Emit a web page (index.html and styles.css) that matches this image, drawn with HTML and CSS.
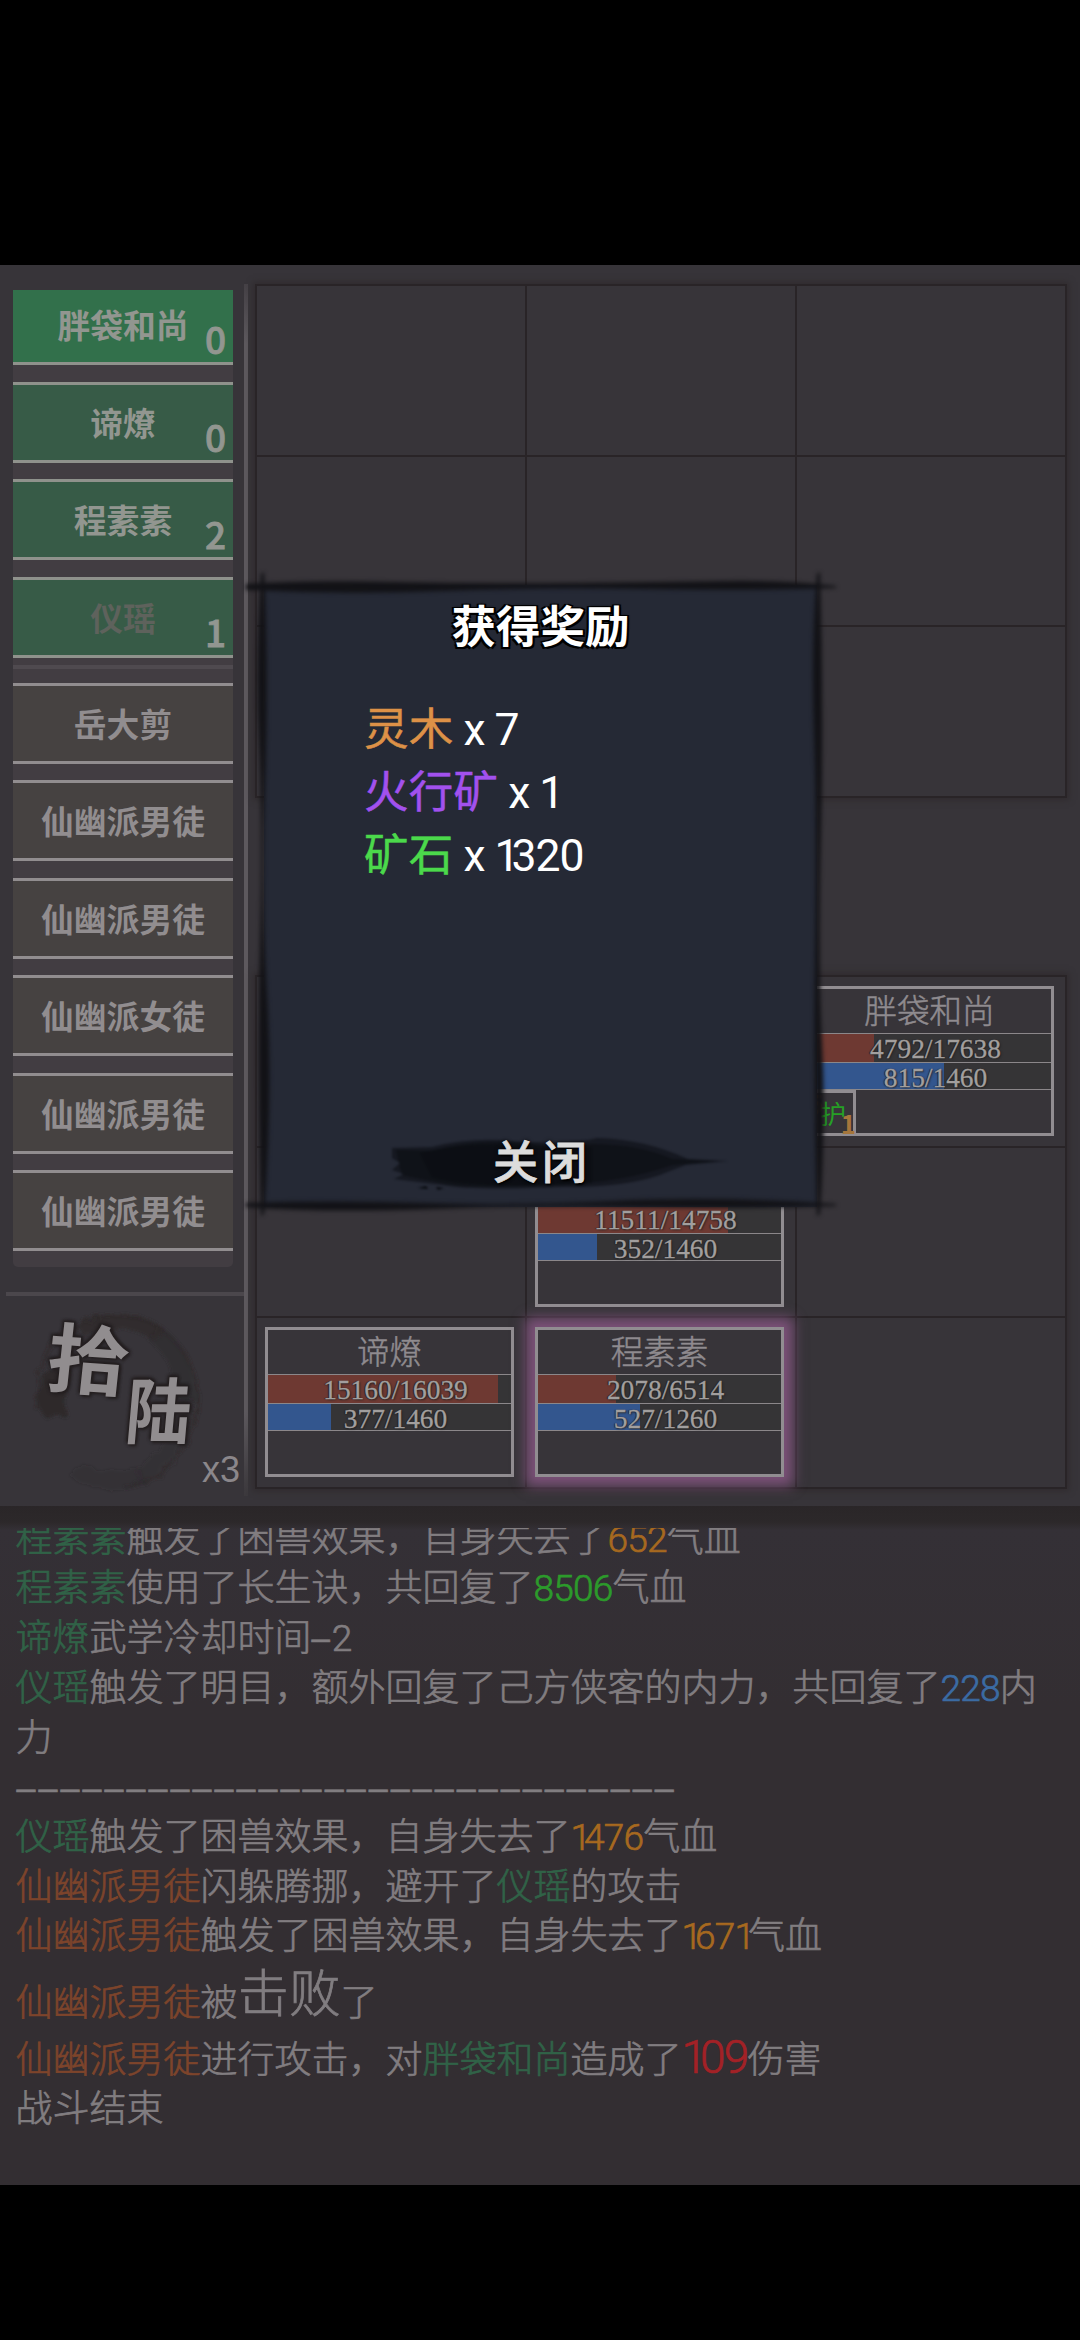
FILE: index.html
```html
<!DOCTYPE html>
<html lang="zh-CN">
<head>
<meta charset="UTF-8">
<meta name="viewport" content="width=device-width, initial-scale=1.0">
<title>战斗</title>
<link rel="stylesheet" href="styles.css">
</head>
<body>

<div class="game">

    <!-- Battle -->
    <div class="battle">
        <div class="side">
            <div class="turn-list">
                <div class="turn ally active">胖袋和尚<b>0</b></div>
                <div class="turn ally">谛燎<b>0</b></div>
                <div class="turn ally">程素素<b>2</b></div>
                <div class="turn ally done"><span>仪瑶</span><b>1</b></div>
                <div class="split"></div>
                <div class="turn">岳大剪</div>
                <div class="turn">仙幽派男徒</div>
                <div class="turn">仙幽派男徒</div>
                <div class="turn">仙幽派女徒</div>
                <div class="turn">仙幽派男徒</div>
                <div class="turn">仙幽派男徒</div>
            </div>
            <div class="round">
                <svg class="ink-ring" width="190" height="190" viewBox="0 0 190 190">
                    <defs>
                        <filter id="rough" x="-10%" y="-10%" width="120%" height="120%"><feTurbulence type="fractalNoise" baseFrequency="0.08" numOctaves="3"/><feDisplacementMap in="SourceGraphic" scale="9"/><feGaussianBlur stdDeviation="1.6"/></filter>
                    </defs>
                    <g filter="url(#rough)" fill="none" stroke="#2d282a">
                        <path d="M18 104C8 50 46 10 96 10C146 10 180 52 177 96C175 140 144 176 104 182" stroke-width="3" opacity=".6"/>
                        <path d="M60 24C84 10 116 12 138 28" stroke-width="16" opacity=".7"/>
                        <path d="M134 26C156 44 166 68 166 96" stroke-width="19" opacity=".5"/>
                        <path d="M166 92C166 124 148 154 118 170" stroke-width="15" opacity=".32"/>
                        <path d="M122 168C96 178 76 176 56 164" stroke-width="18" opacity=".2"/>
                        <path d="M18 78C14 92 20 106 26 112L46 108L44 76L36 56Z" fill="#2b2626" stroke="none" opacity=".8"/>
                    </g>
                </svg>
                <span class="brush shi">拾</span>
                <span class="brush liu">陆</span>
                <span class="times">x3</span>
            </div>
        </div>

        <div class="field">
            <div class="board">
                <div class="cell"></div><div class="cell"></div><div class="cell"></div>
                <div class="cell"></div><div class="cell"></div><div class="cell"></div>
                <div class="cell"></div><div class="cell"></div><div class="cell"></div>
            </div>
            <div class="board">
                <div class="cell"></div>
                <div class="cell"></div>
                <div class="cell">
                    <div class="unit">
                        <div class="unit-name">胖袋和尚</div>
                        <div class="bar hp"><i style="width:27.2%"></i><span>4792/17638</span></div>
                        <div class="bar mp"><i style="width:55.8%"></i><span>815/1460</span></div>
                        <div class="buff"><em>5</em>护<b>1</b></div>
                    </div>
                </div>
                <div class="cell"></div>
                <div class="cell">
                    <div class="unit">
                        <div class="unit-name">仪瑶</div>
                        <div class="bar hp"><i style="width:78%"></i><span>11511/14758</span></div>
                        <div class="bar mp"><i style="width:24.1%"></i><span>352/1460</span></div>
                    </div>
                </div>
                <div class="cell"></div>
                <div class="cell">
                    <div class="unit">
                        <div class="unit-name">谛燎</div>
                        <div class="bar hp"><i style="width:94.5%"></i><span>15160/16039</span></div>
                        <div class="bar mp"><i style="width:25.8%"></i><span>377/1460</span></div>
                    </div>
                </div>
                <div class="cell">
                    <div class="unit current">
                        <div class="unit-name">程素素</div>
                        <div class="bar hp"><i style="width:31.9%"></i><span>2078/6514</span></div>
                        <div class="bar mp"><i style="width:41.8%"></i><span>527/1260</span></div>
                    </div>
                </div>
                <div class="cell"></div>
            </div>
        </div>
    </div>

    <!-- Battle log -->
    <div class="log">
        <div class="log-body">
            <p><span class="us">程素素</span>触发了困兽效果，自身失去了<span class="num lost">652</span>气血</p>
            <p><span class="us">程素素</span>使用了长生诀，共回复了<span class="num heal">8506</span>气血</p>
            <p><span class="us">谛燎</span>武学冷却时间<span class="minus">–</span><span class="num">2</span></p>
            <p><span class="us">仪瑶</span>触发了明目，额外回复了己方侠客的内力，共回复了<span class="num mana">228</span>内力</p>
            <p class="dashes">––––––––––––––––––––––––––––––</p>
            <p><span class="us">仪瑶</span>触发了困兽效果，自身失去了<span class="num lost"><u>1</u>476</span>气血</p>
            <p><span class="foe">仙幽派男徒</span>闪躲腾挪，避开了<span class="us">仪瑶</span>的攻击</p>
            <p><span class="foe">仙幽派男徒</span>触发了困兽效果，自身失去了<span class="num lost"><u>1</u>67<u>1</u></span>气血</p>
            <p><span class="foe">仙幽派男徒</span>被<span class="big">击败</span>了</p>
            <p><span class="foe">仙幽派男徒</span>进行攻击，对<span class="us">胖袋和尚</span>造成了<span class="num hit"><u>1</u>09</span>伤害</p>
            <p>战斗结束</p>
        </div>
    </div>

    <!-- Reward popup -->
    <div class="popup">
        <svg class="popup-frame" width="594" height="660" viewBox="0 0 594 660">
            <g fill="#121216">
                <path d="M2 20Q60 16 150 18T330 19T480 17T592 22V24Q500 27 400 25T200 27T2 26Z"/>
                <path d="M2 639Q90 636 180 639T370 637T592 640V642Q500 645 400 643T190 645T2 643Z"/>
                <path d="M17 10L20 8Q25 110 21 220T23 430T20 650L17 652Q13 500 16 380T15 180T17 10Z"/>
                <path d="M573 10L576 8Q580 140 577 270T578 480T576 650L573 652Q569 520 571 390T570 170T573 10Z"/>
            </g>
        </svg>
        <h2>获得奖励</h2>
        <ul class="rewards">
            <li><span class="c-orange">灵木</span> x 7</li>
            <li><span class="c-purple">火行矿</span> x <u>1</u></li>
            <li><span class="c-green">矿石</span> x <u>1</u>320</li>
        </ul>
        <div class="close">
            <svg width="350" height="60" viewBox="0 0 350 60">
                <g fill="#090b10">
                    <path d="M10 15L50 14Q90 4 130 8Q190 12 215 5Q262 6 306 26L346 28L304 32Q285 39 278 42Q240 55 180 54Q90 58 60 52L12 46L22 41L10 37L18 30L10 25Z" opacity=".55"/>
                    <path d="M14 17L50 18Q90 6 140 10Q170 14 190 12Q250 8 290 26L335 28L290 32Q240 50 170 52Q90 56 60 50L20 42Z" opacity=".5"/>
                    <path d="M38 20Q90 8 150 14H210V50Q90 56 50 44Z" opacity=".5"/>
                    <path d="M36 55l8-2 2 3zM54 54l8 1-6 2z"/>
                </g>
            </svg>
            <span>关闭</span>
        </div>
    </div>
</div>

</body>
</html>
```
FILE: styles.css
```css
* {
    box-sizing: border-box;
    margin: 0;
    padding: 0;
}

body {
    width: 1080px;
    height: 2340px;
    background-color: #000;
    font-family: Roboto, "Noto Sans CJK SC", sans-serif;
    overflow: hidden;
}

u, i, em {
    text-decoration: none;
    font-style: normal;
}

.game {
    position: relative;
    padding-top: 265px;
}

.battle {
    display: flex;
    height: 1241px;
    background-color: #373439;
}

/* left column */
.side {
    width: 248px;
    margin-top: 19px;
    height: 1212px;
    padding-top: 6px;
    border-right: 4px solid;
    border-image: linear-gradient(#454146, #5d595e 5%, #5d595e 93%, #3b383c) 1;
}

.turn-list {
    display: flex;
    flex-direction: column;
    justify-content: flex-end;
    gap: 16.5px;
    width: 220px;
    height: 977px;
    margin-left: 13px;
    padding-bottom: 16px;
    background-color: #423d42;
    border-radius: 0 0 5px 5px;
    overflow: hidden;
}

.turn {
    position: relative;
    flex: none;
    height: 81px;
    line-height: 73px;
    border-top: 3px solid #918d8f;
    border-bottom: 3px solid #918d8f;
    background-color: #464241;
    color: #918d8f;
    font-family: "Noto Sans CJK SC", sans-serif;
    font-size: 32.8px;
    font-weight: 700;
    text-align: center;
}

.ally {
    background-color: #375b47;
    border-color: #8f928c;
    color: #929690;
}

.active {
    background-color: #32704b;
}

.done span {
    color: #5e625c;
}

.turn b {
    position: absolute;
    right: 7px;
    bottom: -2px;
    font-size: 37px;
    line-height: 52px;
    font-weight: 500;
    -webkit-text-stroke: 0.8px;
}

.split {
    flex: none;
    height: 4px;
    margin: -9px 0 -3px;
    background-color: #4f4a4f;
}

.round {
    position: relative;
    height: 206px;
    margin: 25px 0 0 6px;
    border-top: 4px solid #4b474c;
}

.ink-ring {
    position: absolute;
    left: 14px;
    top: 10px;
}

.brush {
    position: absolute;
    color: #918d8f;
    font-family: "Noto Sans CJK SC", sans-serif;
    font-weight: 700;
    line-height: 1;
    text-shadow: 0 0 4px #241f20, 2px 2px 3px #241f20, -2px -2px 3px #241f20, 2px -2px 3px #241f20;
}

.shi {
    left: 42px;
    top: 19px;
    font-size: 82px;
    transform: skew(-6deg, 4deg) scaleY(0.92);
}

.liu {
    left: 117px;
    top: 75px;
    font-size: 72px;
    transform: skewX(-5deg) scaleX(0.9);
}

.times {
    position: absolute;
    right: 4px;
    bottom: 10px;
    color: #8b878b;
    font-family: "Liberation Sans", sans-serif;
    font-size: 36px;
    line-height: 36px;
}

/* boards */
.field {
    padding: 19px 0 0 7px;
}

.board {
    display: grid;
    grid-template-columns: repeat(3, 270px);
    grid-auto-rows: 170.6px;
    width: 812px;
    height: 514px;
    margin-bottom: 177px;
    border: 2px solid #292427;
    border-width: 2px 0 0 2px;
    box-shadow: 0 0 6px 2px #302b2e;
}

.cell {
    padding: 9px 0 0 8px;
    border: 2px solid #292427;
    border-width: 0 2px 2px 0;
    background-color: #373439;
}

.unit {
    position: relative;
    width: 249px;
    height: 150px;
    border: 3px solid #918d91;
    background-color: #373439;
}

.current {
    box-shadow: 0 0 12px 9px #7c5179;
}

.unit-name {
    height: 44px;
    line-height: 40px;
    color: #8f8b8f;
    font-family: "Noto Sans CJK SC", sans-serif;
    font-size: 32.6px;
    font-weight: 300;
    text-align: center;
    -webkit-text-stroke: 0.5px;
}

.bar {
    position: relative;
    height: 28px;
    border-top: 1px solid #8b878a;
    background-color: #353436;
}

.bar i {
    display: block;
    height: 100%;
}

.hp {
    height: 29px;
}

.hp i {
    background-color: #6e3932;
}

.mp i {
    background-color: #33568e;
}

.mp {
    border-bottom: 1px solid #8b878a;
}

.bar span {
    position: absolute;
    inset: 0 0 0 12px;
    color: #a29f9e;
    font-family: "Liberation Serif", serif;
    font-size: 27.4px;
    line-height: 31px;
    text-align: center;
    text-shadow: 1px 1px 2px #222, -1px 0 1px #222;
    -webkit-text-stroke: 0.3px;
}

.mp span {
    line-height: 31px;
}

.buff {
    position: absolute;
    left: 0;
    bottom: -3px;
    width: 48px;
    height: 46px;
    border: 3px solid #918d91;
    color: #26a025;
    font-family: "Noto Sans CJK SC", sans-serif;
    font-size: 26px;
    line-height: 40px;
    text-align: center;
    padding-left: 2px;
}

.buff b, .buff em {
    position: absolute;
    color: #a5763c;
    font-size: 26px;
    line-height: 26px;
    font-weight: 700;
}

.buff b {
    right: -3px;
    bottom: -3px;
}

.buff em {
    left: -3px;
    top: -3px;
    color: #6a4a2c;
}

/* log */
.log {
    height: 679px;
    padding-top: 22px;
    background: linear-gradient(#2a2628, #2c282a 16px, #343036 24px, #332e32 200px, #332e32);
}

.log-body {
    height: 640px;
    padding: 0 30px 0 15.5px;
    color: #817d80;
    font-size: 37px;
    font-weight: 300;
    line-height: 49.6px;
    overflow: hidden;
    -webkit-text-stroke: 0.7px;
}

.log-body p:first-child {
    margin-top: -13.5px;
}

.log-body .num {
    letter-spacing: -0.8px;
}

.log-body .num u {
    letter-spacing: -7px;
}

.us {
    color: #306247;
}

.foe {
    color: #7d442b;
}

.log-body .lost {
    color: #a7691f;
}

.heal {
    color: #2c9a2b;
}

.mana {
    color: #3b6ba3;
}

.log-body .hit {
    color: #a32126;
    font-size: 46px;
    line-height: 0;
    letter-spacing: -1.8px;
}

.big {
    position: relative;
    top: -4px;
    font-size: 51.5px;
    line-height: 74px;
}

.minus, .dashes {
    font-family: "Liberation Sans", sans-serif;
}

.minus {
    position: relative;
    top: -2px;
    margin-right: 2px;
    font-size: 33px;
}

.dashes {
    font-size: 34px;
    letter-spacing: 3.1px;
    padding-left: 1px;
    white-space: nowrap;
}

/* popup */
.popup {
    position: absolute;
    left: 264px;
    top: 585px;
    width: 553px;
    height: 622px;
    background-color: #252935;
    color: #fff;
}

.popup-frame {
    position: absolute;
    left: -20px;
    top: -21px;
    filter: blur(2px);
}

.popup h2 {
    position: relative;
    height: 80px;
    line-height: 78px;
    font-family: "Noto Sans CJK SC", sans-serif;
    font-size: 44.5px;
    font-weight: 700;
    text-align: center;
    text-shadow: 0 0 3px #000, 2px 2px 0 #000, -2px -1px 0 #000, 2px -1px 0 #000, -2px 2px 0 #000;
}

.rewards {
    position: relative;
    height: 444px;
    padding: 34px 0 0 100px;
    list-style: none;
    font-size: 44.5px;
    line-height: 63px;
}

.rewards li {
    letter-spacing: -1px;
}

.rewards span {
    letter-spacing: 0.2px;
    -webkit-text-stroke: 0.5px;
}

.rewards u {
    letter-spacing: -8px;
}

.c-orange {
    color: #dd9147;
}

.c-purple {
    color: #a251ee;
}

.c-green {
    color: #4bd94b;
}

.close {
    position: relative;
    width: 350px;
    height: 60px;
    margin: 24px auto 0 118px;
}

.close svg {
    position: absolute;
    filter: blur(0.8px);
}

.close span {
    position: relative;
    display: block;
    margin-left: -30px;
    color: #dcdcdc;
    font-family: "Noto Sans CJK SC", sans-serif;
    font-size: 45px;
    font-weight: 500;
    letter-spacing: 4px;
    line-height: 54px;
    text-shadow: 0 0 4px #000, 1px 2px 2px #000;
    text-align: center;
    -webkit-text-stroke: 0.8px;
}
```
